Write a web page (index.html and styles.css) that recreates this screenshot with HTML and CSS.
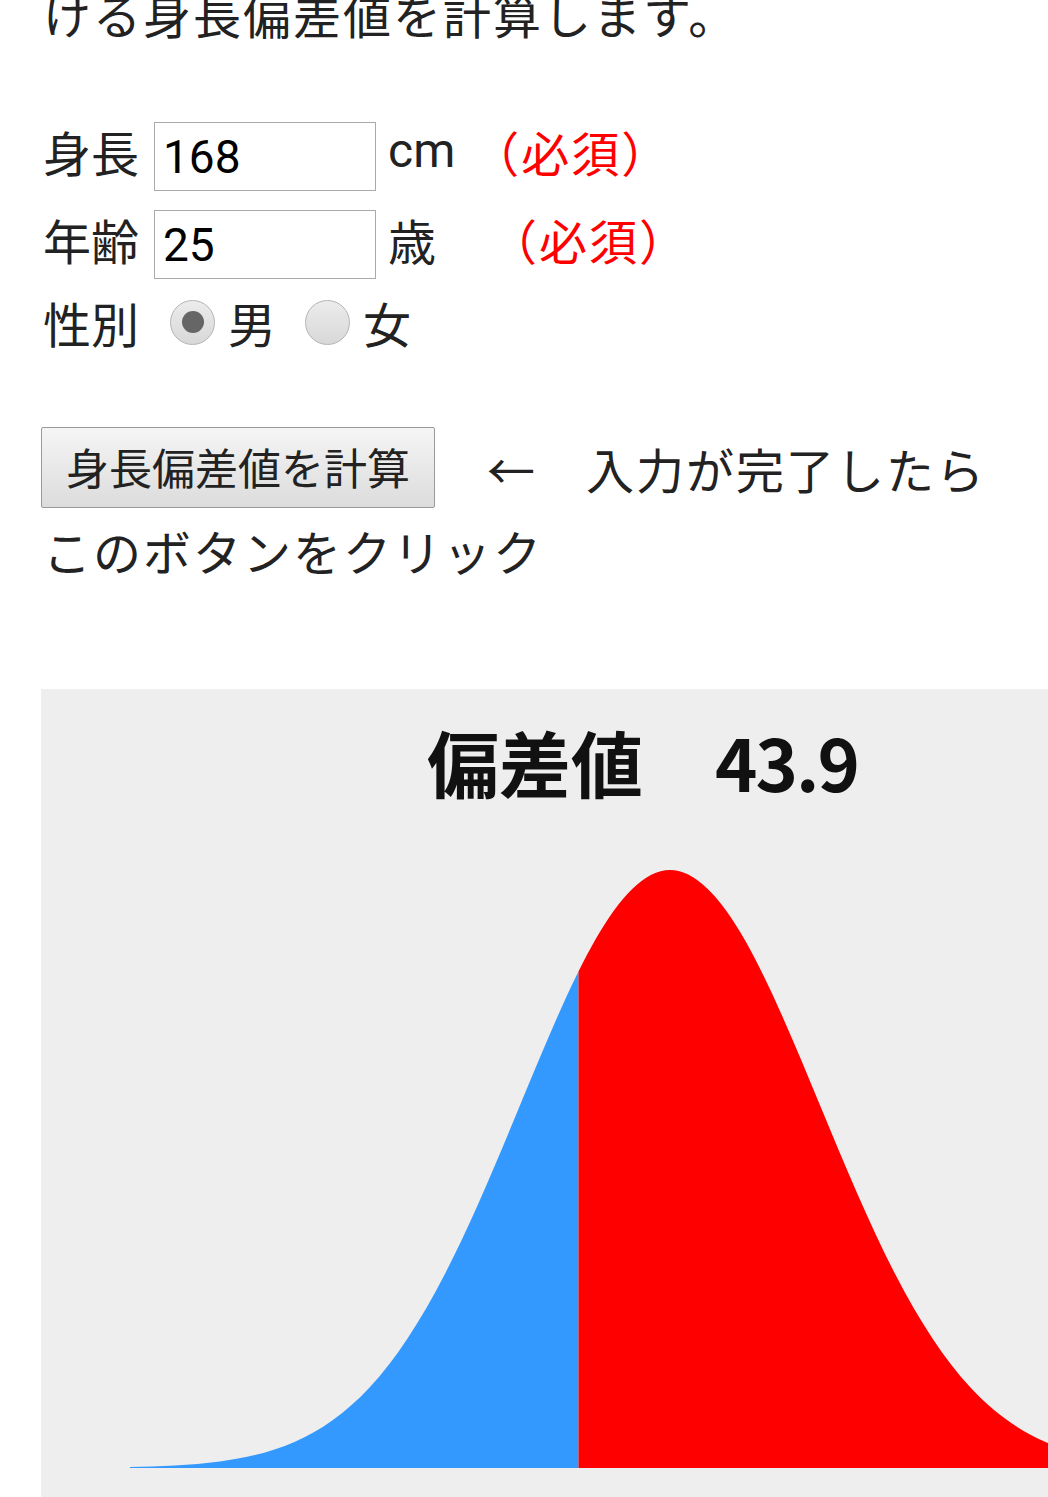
FILE: index.html
```html
<!DOCTYPE html>
<html lang="ja">
<head>
<meta charset="utf-8">
<title>身長偏差値</title>
<link rel="stylesheet" href="styles.css">
</head>
<body>
<div class="page">
  <p class="intro">ける身長偏差値を計算します。</p>
  <div class="form">
    <div class="row row-field">
      <span class="label">身長</span>
      <input class="field" type="text" value="168">
      <span class="unit">cm</span>
      <span class="req req-cm">（必須）</span>
    </div>
    <div class="row row-field">
      <span class="label">年齢</span>
      <input class="field" type="text" value="25">
      <span class="unit">歳</span>
      <span class="req req-age">（必須）</span>
    </div>
    <div class="row row-sex">
      <span class="label">性別</span>
      <span class="radio radio-first checked"></span>
      <span class="radio-label">男</span>
      <span class="radio"></span>
      <span class="radio-label">女</span>
    </div>
  </div>
  <div class="action">
    <button class="calc" type="button">身長偏差値を計算</button>
    <span class="arrow">←</span>
    <span class="hint">入力が完了したら</span>
  </div>
  <p class="hint-next">このボタンをクリック</p>
  <div class="chart">
    <svg class="curve" width="1007" height="808" viewBox="0 0 1007 808">
      <path fill="#3399ff" d="M89,779 L89,778.08 C119,777.42 149,776.36 179,772.4 C204,769.1 229,763.65 254,752.7 C279,741.75 304,725.08 329,698.1 C354,671.12 379,633.35 404,584.8 C429,536.25 454,476.75 479,416.3 C498.5,369.15 518,321.87 537.5,282.5 L537.5,779 Z"/>
      <path fill="#ff0000" d="M537.5,779 L537.5,282.5 C543,271.4 548.5,260.97 554,251.3 C579,207.32 604,181 629,181 C654,181 679,207.32 704,251.3 C729,295.28 754,355.85 779,416.3 C804,476.75 829,536.25 854,584.8 C879,633.35 904,671.12 929,698.1 C954,725.08 979,741.75 1004,752.7 C1029,763.65 1054,769.1 1079,772.4 L1079,779 Z"/>
    </svg>
    <div class="chart-title">偏差値　<span class="score">43.9</span></div>
  </div>
</div>
</body>
</html>
```
FILE: styles.css
```css
html, body {
  margin: 0;
  padding: 0;
  background: #ffffff;
  overflow: hidden;
}

body {
  font-family: Roboto, "Noto Sans CJK JP", sans-serif;
  color: #222222;
  font-size: 48px;
}

.page {
  padding-left: 43px;
}

.intro {
  margin: -14px 0 0;
  height: 64px;
  line-height: 64px;
  letter-spacing: 2px;
  white-space: nowrap;
}

.form {
  margin-top: 72px;
}

.row {
  display: flex;
  align-items: center;
  height: 69px;
  margin-bottom: 19px;
  white-space: nowrap;
}

.row-field .label,
.row-field .unit,
.row-field .req {
  padding-bottom: 12px;
}

.label {
  margin-right: 15px;
}

.field {
  box-sizing: border-box;
  width: 222px;
  height: 69px;
  margin: 0;
  padding: 0 8px;
  border: 1px solid #aaaaaa;
  border-radius: 0;
  font-family: Roboto, "Noto Sans CJK JP", sans-serif;
  font-size: 46px;
  color: #000000;
  background: #ffffff;
  outline: none;
}

.unit {
  margin-left: 12px;
}

.req {
  color: #ff0000;
  letter-spacing: 2px;
}

.req-cm {
  margin-left: 16px;
}

.req-age {
  margin-left: 53px;
}

.row-sex {
  height: 48px;
  margin-bottom: 0;
}

.radio {
  box-sizing: border-box;
  width: 45px;
  height: 45px;
  border-radius: 50%;
  border: 1px solid #b5b5b5;
  background: linear-gradient(#ececec, #d8d8d8);
  display: flex;
  align-items: center;
  justify-content: center;
  margin-left: 29px;
}

.radio-first {
  margin-left: 16px;
}

.radio.checked::after {
  content: "";
  width: 22px;
  height: 22px;
  border-radius: 50%;
  background: #666666;
}

.radio-label {
  margin-left: 13px;
}

.action {
  display: flex;
  align-items: center;
  height: 81px;
  margin-top: 81px;
  white-space: nowrap;
}

.calc {
  box-sizing: border-box;
  height: 81px;
  width: 394px;
  margin: 0 0 0 -2px;
  padding: 6px 24px 0;
  border: 1px solid #9a9a9a;
  border-radius: 2px;
  background: linear-gradient(#f5f5f5, #dcdcdc);
  color: #222222;
  font-family: Roboto, "Noto Sans CJK JP", sans-serif;
  font-size: 43px;
  line-height: 1;
}

.arrow {
  margin-left: 52px;
}

.hint {
  margin-left: 51px;
  letter-spacing: 2px;
}

.hint-next {
  margin: 17px 0 0;
  line-height: 60px;
  height: 60px;
  letter-spacing: 2px;
  white-space: nowrap;
}

.chart {
  display: grid;
  margin-top: 104px;
  margin-left: -2px;
  width: 1007px;
  height: 808px;
  overflow: hidden;
  background: #eeeeee;
}

.curve {
  grid-area: 1 / 1;
  display: block;
}

.chart-title {
  grid-area: 1 / 1;
  align-self: start;
  padding-top: 36px;
  padding-left: 386px;
  font-family: "Noto Sans CJK JP", sans-serif;
  font-weight: 700;
  font-size: 72px;
  line-height: 72px;
  color: #111111;
  white-space: nowrap;
}

.score {
  letter-spacing: -2px;
}
```
